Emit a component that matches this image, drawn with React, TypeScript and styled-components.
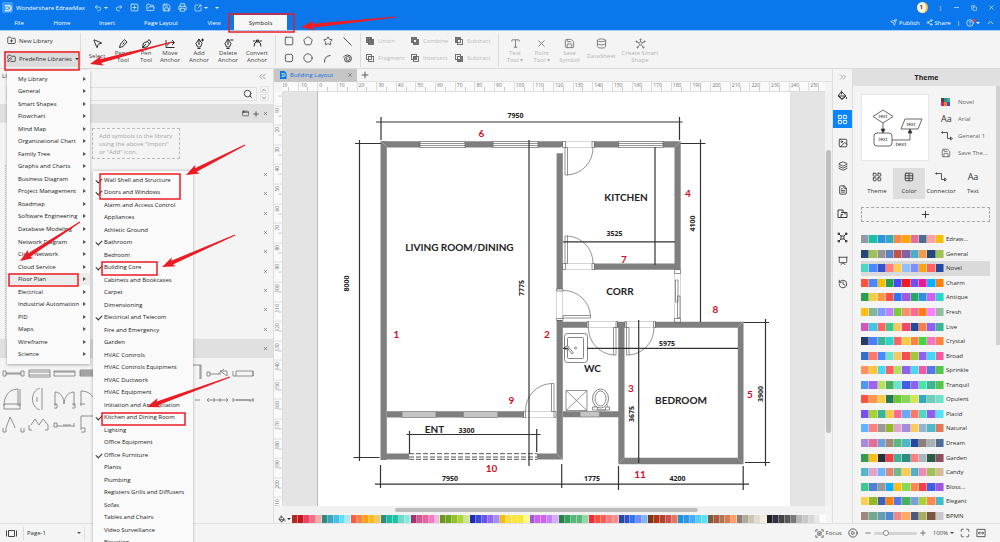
import React from "react";
import styled, { createGlobalStyle, css } from "styled-components";
import {
  AppWindow, ChevronDown, ChevronUp, ChevronsLeft, ChevronsRight, Circle, CirclePlay, CircleQuestionMark, Copy,
  Database, FileText, FolderOpen, FolderPen, FolderPlus, History, Image, Layers, LayoutGrid, Maximize, Minus,
  MousePointer2, Pentagon, Plus, Presentation, Printer, Redo2, Save, Search, Send, Share2, Square,
  SquareArrowOutUpRight, SquarePlus, Star, Table, Type, Undo2, X,
} from "lucide-react";

const BLUE = "#0a78ec";
const INK = "#2c2c2c";

const Global = createGlobalStyle`
  * { box-sizing: border-box; }
  body { margin: 0; background: #f4f4f4; }
  body, button, input, select {
    font: 6px/8px "Open Sans", "Noto Sans", sans-serif;
    color: ${INK};
  }
  button { background: none; border: 0; padding: 0; cursor: pointer; }
  svg { display: block; flex: none; }
`;

const Page = styled.div`
  position: relative;
  display: flex;
  flex-direction: column;
  height: 100vh;
  overflow: hidden;
  background: #f4f4f4;
`;

/* Title bar and menu tabs */
const Header = styled.header`
  background: ${BLUE};
  color: #fff;
  border-bottom: 1px solid #a9cdf3;
  button { color: inherit; }
`;
const TitleRow = styled.div`
  display: flex;
  align-items: center;
  height: 15px;
  padding: 0 5px 0 2px;
`;
const Logo = styled.span`
  display: grid;
  place-items: center;
  width: 11px;
  height: 11px;
  border-radius: 2px;
  background: #3f9bfa;
`;
const AppName = styled.span`
  width: 78px;
  margin-left: 3px;
`;
const QuickTools = styled.div`
  display: flex;
  align-items: center;
  gap: 7px;
  opacity: 0.9;
`;
const IconButton = styled.button`
  display: flex;
  align-items: center;
  justify-content: center;
  gap: 2px;
  color: #444;
`;
const WindowTools = styled.div`
  display: flex;
  align-items: center;
  gap: 11px;
  margin-left: auto;
`;
const Badge = styled.span`
  width: 11px;
  height: 11px;
  border-radius: 50%;
  background: #fdf3d8;
  border-right: 2px solid #f4c04a;
  color: #444;
  font-weight: 700;
  line-height: 11px;
  text-align: center;
`;
const TabRow = styled.nav`
  display: flex;
  align-items: center;
  height: 15px;
  padding-right: 5px;
`;
const MenuTab = styled.button<{ $w: number; $on?: boolean }>`
  width: ${(p) => p.$w}px;
  height: 15px;
  ${(p) => p.$on && css`&& { background: #f7f7f7; color: #222; }`}
`;
const HeaderActions = styled.div`
  display: flex;
  align-items: center;
  gap: 6px;
  margin-left: auto;
`;
const HelpButton = styled(IconButton)`
  position: relative;
  &::after {
    content: "";
    position: absolute;
    top: 0;
    left: 7px;
    width: 3px;
    height: 3px;
    border-radius: 50%;
    background: #f03a2e;
  }
`;

/* Ribbon */
const Ribbon = styled.div`
  display: flex;
  align-items: center;
  height: 38px;
  border-bottom: 1px solid #dadada;
`;
const RibbonGroup = styled.div<{ $w: number }>`
  display: flex;
  width: ${(p) => p.$w}px;
  height: 30px;
  padding: 3px 5px 0;
  justify-content: space-between;
  border-right: 1px solid #dcdcdc;
  &:last-child { border: 0; }
`;
const LibraryGroup = styled.div`
  position: relative;
  z-index: 5;
  display: flex;
  flex-direction: column;
  justify-content: space-between;
  width: 81px;
  height: 34px;
  padding-left: 4px;
  border-right: 1px solid #dcdcdc;
`;
const LibraryButton = styled.button<{ $on?: boolean }>`
  display: flex;
  align-items: center;
  gap: 3px;
  width: 74px;
  height: 16px;
  padding-left: 3px;
  white-space: nowrap;
  background: ${(p) => (p.$on ? "#dcdcdc" : "none")};
`;
const Tool = styled.button<{ $off?: boolean; $single?: boolean; $w: number }>`
  display: flex;
  flex-direction: column;
  align-items: center;
  gap: ${(p) => (p.$single ? 4 : 1)}px;
  width: ${(p) => p.$w}px;
  line-height: 7px;
  color: ${(p) => (p.$off ? "#b5b5b5" : "#444")};
  svg { color: ${(p) => (p.$off ? "#777" : "#222")}; }
`;
const ShapeGrid = styled.div`
  display: grid;
  grid-template-columns: repeat(4, 1fr);
  align-items: center;
  width: 85px;
  height: 34px;
  padding: 0 3px;
  border-right: 1px solid #dcdcdc;
`;
const BoolGrid = styled.div`
  display: grid;
  grid-template-columns: 45px 44px 44px;
  align-items: center;
  width: 138px;
  height: 34px;
  padding-left: 5px;
  border-right: 1px solid #dcdcdc;
`;
const BoolButton = styled.button`
  display: flex;
  align-items: center;
  gap: 4px;
  color: #bbb;
`;

/* Drop-down menus */
const Menu = styled.div`
  position: absolute;
  top: 37px;
  left: 7px;
  width: 83px;
  height: 294px;
  padding: 3px 0;
  display: grid;
  grid-auto-rows: 1fr;
  background: #fafafa;
  box-shadow: 0 1px 3px rgba(0, 0, 0, 0.3);
`;
const MenuItem = styled.button<{ $on?: boolean }>`
  display: flex;
  align-items: center;
  justify-content: space-between;
  padding: 0 4px 0 11px;
  white-space: nowrap;
  color: #222;
  background: ${(p) => (p.$on ? "#ececec" : "none")};
`;
const Caret = styled.span<{ $down?: boolean }>`
  border: 2px solid transparent;
  ${(p) => p.$down
    ? css`border-top-color: currentColor; border-bottom: 0;`
    : css`border-left: 3px solid #555; border-right: 0;`}
`;
const SubMenu = styled.div`
  position: absolute;
  top: 138px;
  left: 93px;
  width: 100px;
  height: 378px;
  padding-top: 3px;
  display: grid;
  grid-auto-rows: 1fr;
  background: #fafafa;
  box-shadow: 0 0 3px rgba(0, 0, 0, 0.3);
`;
const CheckItem = styled.label`
  display: flex;
  align-items: center;
  gap: 3px;
  padding-left: 2px;
  white-space: nowrap;
  color: #222;
`;
const Tick = styled.input`
  appearance: none;
  width: 6px;
  height: 6px;
  margin: 0;
  &:checked::after {
    content: "";
    display: block;
    width: 3px;
    height: 5px;
    margin-left: 2px;
    border: solid #333;
    border-width: 0 1px 1px 0;
    transform: rotate(45deg);
  }
`;

/* Library panel */
const Body = styled.main`
  display: flex;
  flex: 1;
  min-height: 0;
`;
const LibraryPanel = styled.section`
  width: 274px;
  flex: none;
  border-right: 1px solid #ddd;
`;
const PanelTitle = styled.div`
  display: flex;
  align-items: center;
  justify-content: space-between;
  height: 14px;
  padding: 0 5px 0 2px;
`;
const SearchRow = styled.div`
  display: flex;
  align-items: center;
  gap: 3px;
  height: 21px;
  padding: 0 4px 0 6px;
`;
const SearchBox = styled.label`
  display: flex;
  align-items: center;
  flex: 1;
  height: 14px;
  padding-right: 3px;
  border: 1px solid #e0e0e0;
  input { flex: 1; border: 0; background: none; outline: 0; }
`;
const Spin = styled.div`
  display: grid;
  gap: 1px;
  button { width: 9px; height: 7px; border: 1px solid #e2e2e2; border-radius: 1px; }
`;
const GroupBar = styled.div`
  display: flex;
  align-items: center;
  justify-content: flex-end;
  gap: 3px;
  height: 19px;
  padding-right: 5px;
  background: #e0e0e0;
`;
const EmptyNote = styled.p`
  width: 88px;
  height: 31px;
  margin: 5px 0 0 92px;
  padding: 3px 6px;
  border: 1px dashed #bbb;
  color: #a5a5a5;
  white-space: nowrap;
`;
const ClosedGroups = styled.div`
  display: grid;
  grid-auto-rows: 1fr;
  height: 174px;
  margin: 6px 0 0 5px;
  border-left: 1px dotted #ccc;
`;
const ClosedGroup = styled.div`
  display: flex;
  align-items: center;
  justify-content: flex-end;
  padding-right: 5px;
`;
const SymbolGrid = styled.div`
  display: grid;
  grid-template-columns: repeat(10, 1fr);
  grid-template-rows: 32px 18px 32px;
  width: 256px;
  padding-left: 1px;
  align-items: center;
  justify-items: center;
`;

/* Drawing area */
const Stage = styled.section`
  display: flex;
  flex-direction: column;
  flex: 1;
  min-width: 0;
`;
const DocTabs = styled.div`
  display: flex;
  align-items: center;
  gap: 3px;
  height: 13px;
  border-bottom: 1px solid #e0e0e0;
`;
const DocTab = styled.div`
  display: flex;
  align-items: center;
  gap: 3px;
  width: 83px;
  height: 13px;
  padding: 0 4px 0 5px;
  background: #c6c6c6;
  color: #0a6fe0;
  button { margin-left: auto; }
`;
const Rulers = styled.div`
  display: grid;
  grid-template: 10px minmax(0, 1fr) 8px / 9px minmax(0, 1fr) 7px;
  flex: 1;
  min-height: 0;
`;
const TopRuler = styled.div`
  grid-column: 2;
  display: flex;
  overflow: hidden;
  background: #fafafa;
  border-bottom: 1px solid #ddd;
`;
const LeftRuler = styled.div`
  grid-area: 2 / 1;
  overflow: hidden;
  background: #fafafa;
  border-right: 1px solid #ddd;
`;
const TopMarks = styled.div`
  display: grid;
  grid-template-columns: repeat(28, 1fr);
  flex: 0 0 550px;
  margin-left: -5px;
`;
const LeftMarks = styled.div`
  display: grid;
  grid-template-rows: repeat(22, 1fr);
  height: 431px;
  margin-top: -6px;
`;
const Mark = styled.span<{ $side?: boolean }>`
  font-size: 5px;
  line-height: 7px;
  color: #777;
  padding-left: 1px;
  border-left: 1px solid #ddd;
  background: linear-gradient(#ccc, #ccc) 50% 100% / 1px 4px no-repeat;
  ${(p) => p.$side && css`
    display: flex;
    justify-content: flex-end;
    writing-mode: vertical-rl;
    transform: rotate(180deg);
    padding: 0 0 1px;
    border: 0;
    border-bottom: 1px solid #ddd;
    background: linear-gradient(#ccc, #ccc) 0 50% / 4px 1px no-repeat;
  `}
`;
const Canvas = styled.div`
  grid-area: 2 / 2;
  overflow: hidden;
  background: #e4e4e4;
  padding-left: 34px;
`;
const Sheet = styled.div`
  width: 473px;
  height: 100%;
  border-left: 1px solid #bbb;
  background: #fff;
`;
const ScrollY = styled.div`
  grid-area: 2 / 3;
  padding: 58px 1px 73px;
  background: #f1f1f1;
  &::after { content: ""; display: block; height: 100%; border-radius: 3px; background: #c0c0c0; }
`;
const ScrollX = styled.div`
  grid-area: 3 / 2;
  padding: 2px 127px 2px 112px;
  background: #f1f1f1;
  &::after { content: ""; display: block; height: 4px; border-radius: 3px; background: #bdbdbd; }
`;
const ColorBar = styled.div`
  display: flex;
  align-items: center;
  height: 9px;
  padding: 0 6px 0 4px;
  gap: 1px;
`;
const Cells = styled.div`
  display: flex;
  flex: 1;
`;
const Cell = styled.span<{ $c: string }>`
  flex: 1;
  height: 8px;
  background: ${(p) => p.$c};
  border-right: 1px solid rgba(255, 255, 255, 0.4);
`;

/* Right side */
const Rail = styled.nav`
  display: grid;
  grid-template-rows: 15px repeat(9, 1fr);
  align-items: center;
  align-self: flex-start;
  flex: 0 0 19px;
  height: 227px;
`;
const RailButton = styled.button<{ $on?: boolean }>`
  display: grid;
  place-items: center;
  height: 18px;
  color: ${(p) => (p.$on ? "#fff" : "#333")};
  background: ${(p) => (p.$on ? "#0a84ff" : "none")};
`;
const RailColumn = styled.div`
  display: flex;
  border: solid #dedede;
  border-width: 0 1px;
`;
const ThemePanel = styled.aside`
  display: flex;
  flex-direction: column;
  flex: 0 0 147px;
`;
const ThemeTitle = styled.h2`
  margin: 0;
  font-size: 7px;
  line-height: 17px;
  text-align: center;
  color: #222;
  background: #e0e0e0;
`;
const ThemeBody = styled.div`
  display: flex;
  flex-direction: column;
  flex: 1;
  min-height: 0;
  padding: 8px 7px 0 8px;
  background: linear-gradient(#d2d2d2, #d2d2d2) 100% 0 / 4px 259px no-repeat;
`;
const ThemeTop = styled.div`
  display: flex;
  gap: 12px;
`;
const Preview = styled.div`
  width: 68px;
  height: 67px;
  background: #fff;
  border: 1px solid #e6e6e6;
`;
const ThemeFacts = styled.div`
  display: grid;
  grid-auto-rows: 1fr;
`;
const Fact = styled.button`
  display: grid;
  grid-template-columns: 12px auto;
  gap: 5px;
  align-items: center;
  text-align: left;
  color: #666;
`;
const Aa = styled.span`
  font-size: 9px;
  line-height: 10px;
  color: #333;
`;
const NovelDots = styled.span`
  display: grid;
  grid-template-columns: repeat(3, 3px);
  grid-auto-rows: 4px;
`;
const Dot = styled.i<{ $c: string }>`
  background: ${(p) => p.$c};
`;
const ThemeTabs = styled.div`
  display: grid;
  grid-template-columns: repeat(4, 32px);
  margin: 7px 0 8px;
`;
const ThemeTab = styled.button<{ $on?: boolean }>`
  display: flex;
  flex-direction: column;
  align-items: center;
  justify-content: center;
  gap: 5px;
  height: 31px;
  color: #333;
  background: ${(p) => (p.$on ? "#dedede" : "none")};
`;
const AddScheme = styled.button`
  display: grid;
  place-items: center;
  height: 15px;
  margin: 0 3px 10px 0;
  border: 1px dashed #aaa;
`;
const Schemes = styled.div`
  display: grid;
  grid-auto-rows: 1fr;
  flex: 1;
  min-height: 0;
  margin-right: 3px;
`;
const Scheme = styled.button<{ $on?: boolean }>`
  display: flex;
  align-items: center;
  gap: 2px;
  background: ${(p) => (p.$on ? "#dadada" : "none")};
`;
const Swatches = styled.span`
  display: flex;
  width: 83px;
`;

/* Status bar */
const Status = styled.footer`
  display: flex;
  align-items: center;
  height: 19px;
  padding: 0 14px 0 6px;
  border-top: 1px solid #e0e0e0;
`;
const PageBox = styled.label`
  display: flex;
  align-items: center;
  width: 62px;
  height: 13px;
  margin-left: 6px;
  padding: 0 3px;
  border: solid #ddd;
  border-width: 0 1px;
  color: #555;
`;
const PageSelect = styled.select`
  appearance: none;
  flex: 1;
  border: 0;
  background: none;
`;
const StatusTools = styled.div`
  display: flex;
  align-items: center;
  gap: 6px;
  margin-left: auto;
`;
const ZoomGroup = styled.div`
  display: flex;
  align-items: center;
  gap: 2px;
`;
const Zoom = styled.input`
  appearance: none;
  width: 43px;
  height: 3px;
  margin: 0;
  border-radius: 2px;
  background: #d4d4d4;
  &::-webkit-slider-thumb {
    appearance: none;
    width: 6px;
    height: 6px;
    border-radius: 50%;
    border: 1px solid #888;
    background: #fff;
  }
`;
const Marks = styled.svg`
  position: absolute;
  top: 0;
  left: 0;
  z-index: 9;
  pointer-events: none;
`;

const MENU = ["My Library", "General", "Smart Shapes", "Flowchart", "Mind Map", "Organizational Chart", "Family Tree",
  "Graphs and Charts", "Business Diagram", "Project Management", "Roadmap", "Software Engineering",
  "Database Modeling", "Network Diagram", "Cisco Network", "Cloud Service", "Floor Plan", "Electrical",
  "Industrial Automation", "PID", "Maps", "Wireframe", "Science"];

/* A leading star marks a library that is switched on. */
const SUB = ["*Wall Shell and Structure", "*Doors and Windows", "Alarm and Access Control", "Appliances",
  "Athletic Ground", "*Bathroom", "Bedroom", "*Building Core", "Cabinets and Bookcases", "Carpet", "Dimensioning",
  "*Electrical and Telecom", "Fire and Emergency", "Garden", "HVAC Controls", "HVAC Controls Equipment",
  "HVAC Ductwork", "HVAC Equipment", "Initiation and Annunciation", "*Kitchen and Dining Room", "Lighting",
  "Office Equipment", "*Office Furniture", "Plants", "Plumbing", "Registers Grills and Diffusers", "Sofas",
  "Tables and Chairs", "Video Surveillance", "Elevation"];

const PALETTE = `b02a1e c8141e f04060 f56a8a f9a8a8 2b8c84 36a9bd 45bfe6 5be0f5 a8e6fa ff5a3c ff8040 ffa011 ffb91a f8c760
2b8c84 17bfa0 1cc3a6 6edcc8 88ece6 a0356a d05a94 f06098 f57acb f0bada 6a981e 6fa51f 94c024 aad43c d0e68a
1f2bb5 3b49d8 7050f0 9068f2 a88cf5 f5be0a f9e039 f8e638 f8e638 ffff80 9f57e0 cc62f0 cc62f0 c083ff d9a8fb
27804a 34a05a 55b87a 5bb87e 92d8a6 ef2b36 ff5038 ff5a5a ff7a7a ff8c8c 2349a0 3450d0 2e76f5 6f8bff 7cb6f5
78380c b0341a b0452c d05050 e07a5c 1e93dc 2d98e8 44aaff 4fd4ee 58e2f5 7c583c b0583c a87850 e07a50 ffa068
8a8078 b3a998 cdc6b6 e2dccf f6ecdc 1f1f27 2e3140 434343 5a5a5a 7a7a7a b8b8b8 c8c8c8 d8d8d8 e8e8e8 fcfcfc`.split(/\s+/);

const SCHEMES: [string, string][] = [
  ["Edraw...", "8e9aa8 1cbfa2 2d94dc 36a9bd f98840 ffa411 e07098 4f6c94 f8a2a2 f5be0a"],
  ["General", "234878 a0c058 949494 5a82bf c8504c 8062a2 4aaec6 f89848 234878 a0c058"],
  ["Novel", "4fd6c2 4a88ff 3a50c8 ff8080 ffcc58 90c0ff 7f90ff ffa411 ff6464 2349a0"],
  ["Charm", "ff5438 4a88ff f5be0a 27a052 4b48ff ef1b24 7050f0 ec1898 10acff ff8010"],
  ["Antique", "27a052 f4cc48 f89848 f05050 2e76f5 9f57e0 27a862 2d94dc cc62f0 2cd6cc"],
  ["Fresh", "ffbe18 80b89a 8098ff c083ff 78cc38 ff9068 ff6890 ff8010 ff80ff 90bca0"],
  ["Live", "d058b8 44c4e0 ff6464 40c888 f8c860 f04868 2349a0 ff8040 9060f0 3eb496"],
  ["Crystal", "283868 4a80ff 3eb496 2cd6cc ff6464 f4cc48 ff8440 40d840 f474c8 ff8440"],
  ["Broad", "3070c8 ff7868 4a88ff 6ee2cc f8c860 f05050 a0c838 9060f0 44d8f0 f05ca0"],
  ["Sprinkle", "ff9060 ffc440 4ad8f0 ff6060 b4e060 9060e8 4ad8f0 f05ca0 5478e8 58c450"],
  ["Tranquil", "4f98f0 9f62e8 b8e060 48b060 6ee2cc 4060e0 9060f0 48e4a8 3eb496 58c450"],
  ["Opulent", "ff5040 f89848 f4cc48 27784a 68c838 88d858 d4e658 36a9bd 70ccb8 6ee2cc"],
  ["Placid", "7850f0 a8d038 3eb496 f4cc48 ff6890 68a8f8 ff7868 50d8c0 9060f0 58e2f5"],
  ["Natural", "60b4ff ff8080 989898 94b828 e0a4cc a48cd8 ffcc58 98b4cc 50b8c8 e07a5c"],
  ["Dream", "a48cd8 e07098 70a0d8 a48878 58b880 50b8c8 2349a0 8a8078 a8b4b8 4f6c94"],
  ["Garden", "389a50 ffbe18 2a303c f04048 3eb496 2b8c84 ff8080 a8b4b8 305a48 8c5060"],
  ["Candy", "50b8c8 e0a4cc 70b4ff e08878 78b888 ffcc58 50b0c8 f088b4 a0c058 d4bc98"],
  ["Bloss...", "40c888 5080d0 989898 10acff ffbe18 88d858 ff8850 f04048 4060e0 9f57e0"],
  ["Elegant", "ffcc58 94b828 4060b0 ff8010 5478e8 48b060 78a0d8 a8d038 ff8850 44bcc8"],
  ["BPMN", "9c8880 70a890 689cb4 5088d0 f08888 ffa860 50587c a8b060 785840 c8c8c8"],
];

const SYMBOLS = [
  "M1 8v5h3v-5zM19 8v5h3v-5zM4 10h15M4 11h15", "M1 7h21v7h-21zM1 9h21M1 12h21", "M1 8h21v5h-21zM1 9h21",
  "M1 7h21v6h-21zM1 8h21M1 9h21M1 10h21M1 11h21M1 12h21", "", "", "", "M8 2h12v14M19 2v14",
  "M1 9v4h3v-4zM4 11h8l6-5M12 11h3M14 8l7 5v-5z", "M1 8v5h3v-5M4 8h17v5h-17M21 8v5",
  "M18 18V1M16 18V1C7 1 2 8 2 18M2 16h16v5h-16z", "M14 0v22M12 0C2 3 2 19 12 22M9 9v5",
  "M2 18V4C8 4 11 10 11 16C11 10 15 4 21 4v14M1 16h3v4h-3M19 16h3v4h-3", "M2 18V3C10 3 16 8 16 16M1 16h5M17 16h5",
  "", "", "", "M1 12h9M2 10v4M14 12h5", "M1 12h21M3 10l-2 2 2 2M8 10v4M14 10v4M20 10l2 2-2 2",
  "M1 12h21M1 10v4M4 12h14v2M21 10v4",
  "M1 15v4h3v-4M4 15L8 4L12 12L13 15M19 15v4h3v-4", "M1 12v5h3M3 12L7 6L11 12L15 6L20 12M20 12v5h-3",
  "M1 10v4h3v-4zM4 13h17M10 12h8M21 10v4", "M2 17V3h18M2 15h4v4h-4M16 15h5v4", "", "", "", "", "", "",
];

/* Tapered pointer from (x1, y1) to its head at (x2, y2). */
function arrow(x1: number, y1: number, x2: number, y2: number) {
  const len = Math.hypot(x2 - x1, y2 - y1);
  const ux = (x2 - x1) / len, uy = (y2 - y1) / len;
  const at = (back: number, side: number) => `${x2 - ux * back - uy * side},${y2 - uy * back + ux * side}`;
  return [at(0, 0), at(13, 5), at(11, 2), at(len, 0.5), at(len, -0.5), at(11, -2), at(13, -5)].join(" ");
}

const ARROWS = [[396, 17, 301, 27], [172, 42, 90, 64], [245, 145, 186, 175], [80, 222, 20, 261], [235, 235, 162, 267], [230, 377, 147, 407]];
const BOXES = [[229, 14, 65, 18], [5, 52, 74, 18], [100, 174, 80, 25], [102, 262, 55, 13], [102, 413, 83, 12], [9, 274, 69, 12]];

function Annotations() {
  return (
    <Marks width="400" height="440" fill="none" stroke="#ec1c24" aria-hidden="true">
      {BOXES.map(([x, y, w, h]) => <rect key={y} x={x} y={y} width={w} height={h} strokeWidth="1.5" />)}
      {ARROWS.map((a) => <polygon key={a.join()} points={arrow(a[0], a[1], a[2], a[3])} fill="#ec1c24" stroke="none" />)}
    </Marks>
  );
}

const WALLS = `M380.5 141.3H420v6.3H380.5zM465 141.3h28v6.3h-28zM538 141.3h25v5l-3 1.3H538zM594 141.3h24.5v6.3H594zM663 141.3h17.7v128h-6.2V147.6H663z
M380.5 141h6.3v319h-6.3zM556.6 153.3h6.2V289h-6.2zM556.6 320h6.2v139.5h-6.2zM594 263.5h86.5v6.3H594z
M557 321.7h30v6H557zM617 321.7h8v6h-8zM655 321.7h88.5V464.2H618.3V324h6.2v133.7h113.3V327.7H655z
M387 411.3h15v6.3h-15zM436 411.3h27.5v6.3H436zM498 411.3h26v6.3h-26zM563 411.3h17v5.9h-17zM599.5 411.3h19v5.9h-19z
M381 453.5h28v6h-28zM537 453.5h21v6h-21z`;
const DIMS = `M376 122H682.5M381 117v23M679.5 117v23M359.5 140v321M355 143.5h26M353.5 457.500h26M529 140v326M655 147v118
M563 241.8h112M700.5 139.5V322M680.5 143.5h25M765.5 319v147M743.5 322.5h25.5M745 462.5h25M563 348.3h5M587 348.3h151
M638.7 320v143M406.5 434.5h134M409.5 431v23M536.7 429v23M375 484.2h374M380.5 465v23M561.7 464v24M618.5 466v24M743.2 466v24`;
const THIN = `M420 141.5h45M420 143.5h45M420 145.5h45M420 147.5h45M493 141.5h45M493 143.5h45M493 145.5h45M493 147.5h45M618.5 141.5H663M618.5 143.5H663M618.5 145.5H663M618.5 147.5H663
M420 141v7M465 141v7M493 141v7M538 141v7M618.5 141v7M663 141v7
M562.5 141.5h3v6h-3zM592 141.5h2.5v6h-2.5zM565 147.5h2.5V175h-2.5zM567 175A27 27 0 0 0 593 148
M562.5 263.5h3v6h-3zM592 263.5h2.5v6h-2.5zM565 236h2.5v27.5h-2.5zM567 236A27 27 0 0 1 593 263.5
M556.5 289h6.5v2h-6.5zM556.5 318.5h6.5v2h-6.5zM563 315.5h27.5v2.5H563zM563 290.5A27 27 0 0 1 590.5 316
M674.5 269.5h6v4h-6zM674.5 318.5h6v4h-6zM675.5 280h2.5v22h-2.5zM677.5 296h2.5v22h-2.5z
M587 321.5h1.5v6h-1.5zM616 321.5h1.5v6h-1.5zM613.5 327.5h2.5V355h-2.5zM588.5 328A27 27 0 0 0 613.5 355
M625 321.5h1.5v6h-1.5zM653.5 321.5h2v6h-2zM626.5 327.5h2.5V355h-2.5zM654 328A27 27 0 0 1 629 355
M523.5 411.5h2v6h-2zM554 411.5h2v6h-2zM551.5 383.5h2.5v28h-2.5zM551.5 383.5A27 27 0 0 0 525.5 411
M566 390.5h21v20h-21zM566 390.5l21 20M587 390.5l-21 20M592.5 410v-3h5v3h8v-3h4v3zM594.5 407l2-4M608 407l-2-4`;
const PALE = `M565.5 141.5H592M565.5 147.5H592M565.5 263.5H592M565.5 269.5H592M556.5 291v27.5M562.5 291v27.5M674.5 273v46M680.5 273v46
M588 321.5h28M588 327.5h28M626 321.5h28M626 327.5h28M525 411.5h29M525 417.5h29M381 141l6 6M680.5 141l-6 6M557 454l6 6M618 464l6-6M743.5 464l-6-6M743.5 321.5l-6 6`;

const NUMBERS: [string, number, number][] = [["1", 396.5, 338], ["2", 547, 338], ["3", 631, 392], ["4", 688, 197],
  ["5", 750, 398], ["6", 481.5, 137], ["7", 624, 263], ["8", 715.5, 313], ["9", 511.5, 404], ["10", 491.5, 472], ["11", 640, 478]];
const ROOMS: [string, number, number][] = [["LIVING ROOM/DINING", 459.5, 251], ["KITCHEN", 626, 201], ["CORR", 620, 295],
  ["WC", 592.5, 372], ["BEDROOM", 681, 404], ["ENT", 434.5, 433]];
const LENGTHS: [string, number, number, boolean?][] = [["7950", 515.5, 118], ["3525", 614.5, 236], ["5975", 667, 345.5],
  ["3300", 466.5, 433], ["7950", 450, 480.5], ["1775", 592, 481], ["4200", 677.5, 481],
  ["8000", 349, 283.5, true], ["7775", 523.5, 288, true], ["4100", 694.5, 223.5, true], ["3675", 633.5, 414, true], ["3900", 762.5, 394, true]];

const Plan = styled.svg`
  text { text-anchor: middle; fill: #222; }
  .room { font: 700 10px Lato, sans-serif; }
  .mark { font: 700 10px Lato, sans-serif; fill: #d40c1c; }
  .size { font: 700 7px "Open Sans", sans-serif; }
`;

function FloorPlan() {
  return (
    <Plan viewBox="318 92 472 415" width="472" height="415" fill="none" role="img" aria-label="Floor plan">
      <path d={WALLS} fill="#7f7f7f" />
      <path d={PALE} stroke="#bbb" strokeWidth="0.6" />
      <path d="M402 411.5h34v6h-34zM463.5 411.5h34v6h-34zM580 411.5h19.5v5.5h-19.5z" fill="#c4c4c4" stroke="#777" strokeWidth="0.7" />
      <path d="M409 453.7h128M409 457h128M409 459.3h128" stroke="#555" strokeDasharray="5 2" />
      <path d={THIN} stroke="#666" strokeWidth="0.7" />
      <g stroke="#666" strokeWidth="0.8">
        <rect x="564.5" y="333.5" width="23" height="29" rx="3" />
        <rect x="567.5" y="337.5" width="16" height="21" rx="1" />
        <circle cx="575.5" cy="348" r="1" />
        <circle cx="567" cy="348" r="2" fill="#fff" />
        <path d="M568 349l4 5 1.5-1-4-5" />
        <ellipse cx="600.5" cy="398.5" rx="8" ry="9.5" fill="#fff" />
        <ellipse cx="600.5" cy="398.5" rx="5.5" ry="7.5" />
      </g>
      <path d={DIMS} stroke="#333" strokeWidth="1.2" />
      {ROOMS.map(([t, x, y]) => <text key={t} className="room" x={x} y={y}>{t}</text>)}
      {NUMBERS.map(([t, x, y]) => <text key={t} className="mark" x={x} y={y}>{t}</text>)}
      {LENGTHS.map(([t, x, y, up]) => (
        <text key={t + x} className="size" x={x} y={y} transform={up ? `rotate(-90 ${x} ${y})` : undefined}>{t}</text>
      ))}
    </Plan>
  );
}

function ThemePreview() {
  return (
    <svg viewBox="0 0 66 65" width="66" height="65" fill="none" stroke="#444" strokeWidth="0.8">
      <path d="M21 15L31 21.5L21 28L11 21.5zM43 24h17l-4 10H39zM15 38h12q3 0 3 3v7q0 3-3 3H15q-3 0-3-3v-7q0-3 3-3zM21 28v8M30 45h18V36" />
      <path d="M19 34h4l-2 4zM46 38h4l-2-4z" fill="#222" />
      <g fill="#222" stroke="none" fontSize="5" textAnchor="middle">
        <text x="21" y="23">text</text><text x="49" y="31">text</text><text x="21" y="46">text</text>
        <text x="39" y="51" fontSize="6">text</text>
      </g>
    </svg>
  );
}

const Glyph = ({ d, size = 11 }: { d: string; size?: number }) => (
  <svg width={size} height={size} viewBox="0 0 22 22" fill="none" stroke="currentColor" strokeWidth="1.9"><path d={d} /></svg>
);
const NIB = "M10 2L4 11l3 7h6l3-7zM10 2v9M7 21h6M8 12h4";
const ATOM = "M11 8a3 3 0 1 0 .1 0zM11 8V4M8 10L4 8M14 10l4-2M9 14l-3 4M13 14l3 4M10 2h2v2h-2zM2 6h2v2H2zM18 6h2v2h-2zM4 18h2v2H4zM16 18h2v2h-2z";
const BUCKET = "M9 3l9 9-8 7-8-7zM4 12h13l-7 6zM19 14v4M9 1v8";
const FLOOR = "M2 4h10v5H8M12 9h8v10H2V4M8 19v-6h4M16 9v4";
const HUB = "M8 8h6v6H8zM8 8L4 4M14 8l4-4M8 14l-4 4M14 14l4 4M2 2h3v3H2zM17 2h3v3h-3zM2 17h3v3H2zM17 17h3v3h-3z";
const FOCUS = "M2 7V2h5M15 2h5v5M20 15v5h-5M7 20H2v-5M7 7h8v8H7zM9 11h4";

const Connector = () => (
  <svg width="12" height="10" viewBox="0 0 24 20" fill="none" stroke="#444" strokeWidth="1.8">
    <path d="M1 3h3M5 3h8v12h6" /><circle cx="3" cy="3" r="1.5" /><path d="M19 12l4 3-4 3z" />
  </svg>
);
const Bool = ({ a, b, c }: { a: string; b: string; c: string }) => (
  <svg width="8" height="8" viewBox="0 0 16 16" stroke="#666" strokeWidth="1.8">
    <rect x="1" y="1" width="10" height="10" fill={a} /><rect x="5" y="5" width="10" height="10" fill={b} />
    <rect x="5" y="5" width="6" height="6" fill={c} />
  </svg>
);

const light = "#f4f4f4", gray = "#777";

export default function App() {
  return (
    <Page>
      <Global />
      <Header>
        <TitleRow>
          <Logo>
            <svg width="8" height="8" viewBox="0 0 16 16" fill="none" stroke="#fff" strokeWidth="2.5">
              <path d="M2 3h7q5 0 5 5t-5 5H2M3 8h6" />
            </svg>
          </Logo>
          <AppName>Wondershare EdrawMax</AppName>
          <QuickTools>
            <IconButton aria-label="Undo"><Undo2 size={8} /><Caret $down /></IconButton>
            <IconButton aria-label="Redo"><Redo2 size={8} /></IconButton>
            <IconButton aria-label="New"><SquarePlus size={9} /></IconButton>
            <IconButton aria-label="Open"><FolderOpen size={9} /></IconButton>
            <IconButton aria-label="Save"><Save size={9} /></IconButton>
            <IconButton aria-label="Print"><Printer size={9} /></IconButton>
            <IconButton aria-label="Export"><SquareArrowOutUpRight size={8} /><Caret $down /></IconButton>
            <IconButton aria-label="More"><Caret $down /></IconButton>
          </QuickTools>
          <WindowTools>
            <Badge>1</Badge><span>|</span>
            <IconButton aria-label="Minimize"><Minus size={7} /></IconButton>
            <IconButton aria-label="Restore"><Copy size={6} /></IconButton>
            <IconButton aria-label="Close"><X size={7} /></IconButton>
          </WindowTools>
        </TitleRow>
        <TabRow>
          <MenuTab $w={38}>File</MenuTab>
          <MenuTab $w={48}>Home</MenuTab>
          <MenuTab $w={42}>Insert</MenuTab>
          <MenuTab $w={66}>Page Layout</MenuTab>
          <MenuTab $w={40}>View</MenuTab>
          <MenuTab $w={53} $on>Symbols</MenuTab>
          <HeaderActions>
            <IconButton><Send size={7} />Publish</IconButton>
            <IconButton><Share2 size={7} />Share</IconButton>
            <span>|</span>
            <HelpButton aria-label="Help"><CircleQuestionMark size={8} /><Caret $down /></HelpButton>
            <IconButton aria-label="Collapse ribbon"><ChevronUp size={9} /></IconButton>
          </HeaderActions>
        </TabRow>
      </Header>

      <Ribbon>
        <LibraryGroup>
          <LibraryButton><FolderPlus size={9} />New Library</LibraryButton>
          <LibraryButton $on><FolderPen size={9} />Predefine Libraries<Caret $down /></LibraryButton>
          <Menu role="menu">
            {MENU.map((m) => <MenuItem key={m} role="menuitem" $on={m === "Floor Plan"}>{m}<Caret /></MenuItem>)}
          </Menu>
          <SubMenu>
            {SUB.map((s) => (
              <CheckItem key={s}><Tick type="checkbox" defaultChecked={s[0] === "*"} />{s.replace("*", "")}</CheckItem>
            ))}
          </SubMenu>
        </LibraryGroup>
        <RibbonGroup $w={195}>
          <Tool $w={22} $single><MousePointer2 size={11} />Select</Tool>
          <Tool $w={24}><Glyph d="M3 19l2-7L13 3l5 5-8 9zM9 13l4-4" />Pencil<br />Tool</Tool>
          <Tool $w={16}><Glyph d="M3 19l2-9 8-3 4 5-5 6zM3 19l7-7M13 7l3-4 4 5-3 4" />Pen<br />Tool</Tool>
          <Tool $w={26}><Glyph d="M2 4v15h17M5 15q1-6 6-6h7M14 4l5 5-5 5" />Move<br />Anchor</Tool>
          <Tool $w={26}><Glyph d={NIB + "M17 1v6M14 4h6"} />Add<br />Anchor</Tool>
          <Tool $w={26}><Glyph d={NIB + "M14 4h7"} />Delete<br />Anchor</Tool>
          <Tool $w={26}><Glyph d="M2 6h5M15 6h5M4 17q0-9 7-11 7 2 7 11M9 4h4v4h-4z" />Convert<br />Anchor</Tool>
        </RibbonGroup>
        <ShapeGrid>
          <IconButton aria-label="Rectangle"><Square size={10} /></IconButton>
          <IconButton aria-label="Pentagon"><Pentagon size={10} /></IconButton>
          <IconButton aria-label="Star"><Star size={10} /></IconButton>
          <IconButton aria-label="Line"><Glyph d="M3 3l16 16" /></IconButton>
          <IconButton aria-label="Rounded rectangle"><Glyph size={10} d="M7 3h8q4 0 4 4v8q0 4-4 4H7q-4 0-4-4V7q0-4 4-4z" /></IconButton>
          <IconButton aria-label="Circle"><Circle size={10} /></IconButton>
          <IconButton aria-label="Arc"><Glyph d="M5 19Q4 6 17 5" /></IconButton>
          <IconButton aria-label="Spiral"><Glyph d="M2 9Q5 4 11 4q8 0 8 7t-8 7q-6 0-6-5t6-6q5 0 5 4t-5 4q-3 0-3-3 1-2 3-1" /></IconButton>
        </ShapeGrid>
        <BoolGrid>
          <BoolButton><Bool a={gray} b={gray} c={gray} />Union</BoolButton>
          <BoolButton><Bool a={gray} b={gray} c={light} />Combine</BoolButton>
          <BoolButton><Bool a={gray} b={light} c={light} />Subtract</BoolButton>
          <BoolButton><Bool a={light} b={light} c={light} />Fragment</BoolButton>
          <BoolButton><Bool a={light} b={light} c={gray} />Intersect</BoolButton>
          <BoolButton><Bool a={light} b={gray} c={light} />Subtract</BoolButton>
        </BoolGrid>
        <RibbonGroup $w={165}>
          <Tool $off $w={22}><Type size={11} />Text<br />Tool ▾</Tool>
          <Tool $off $w={22}><X size={11} />Point<br />Tool ▾</Tool>
          <Tool $off $w={24}><Save size={11} />Save<br />Symbol</Tool>
          <Tool $off $single $w={30}><Database size={11} />DataSheet</Tool>
          <Tool $off $w={38}><Glyph d={ATOM} />Create Smart<br />Shape</Tool>
        </RibbonGroup>
      </Ribbon>

      <Body>
        <LibraryPanel>
          <PanelTitle>Libraries<ChevronsLeft size={11} strokeWidth={1} /></PanelTitle>
          <SearchRow>
            <SearchBox><input aria-label="Search symbols" /><Search size={10} /></SearchBox>
            <Spin>
              <button aria-label="Previous"><ChevronUp size={6} /></button>
              <button aria-label="Next"><ChevronDown size={6} /></button>
            </Spin>
          </SearchRow>
          <GroupBar><AppWindow size={7} /><Plus size={8} /><X size={5} /></GroupBar>
          <EmptyNote>Add symbols to the library<br />using the above "Import"<br />or "Add" icon.</EmptyNote>
          <ClosedGroups>
            {Array.from({ length: 9 }, (_, n) => <ClosedGroup key={n}><X size={5} /></ClosedGroup>)}
          </ClosedGroups>
          <GroupBar><X size={5} /></GroupBar>
          <SymbolGrid>
            {SYMBOLS.map((d, n) => (
              <svg key={n} width="23" height="22" viewBox="0 0 23 22" fill="none" stroke="#777" strokeWidth="0.8"><path d={d} /></svg>
            ))}
          </SymbolGrid>
        </LibraryPanel>

        <Stage>
          <DocTabs>
            <DocTab>
              <svg width="8" height="8" viewBox="0 0 16 16">
                <path d="M2 0h9l4 4v12H2z" fill={BLUE} />
                <path d="M5 5h4q3 0 3 3t-3 3H5M6 8h3" stroke="#fff" strokeWidth="1.5" fill="none" />
              </svg>
              Building Layout
              <IconButton aria-label="Close tab"><X size={6} /></IconButton>
            </DocTab>
            <IconButton aria-label="New tab"><Plus size={10} /></IconButton>
          </DocTabs>
          <Rulers>
            <TopRuler><TopMarks>{Array.from({ length: 28 }, (_, n) => <Mark key={n}>{n * 10 - 20}</Mark>)}</TopMarks></TopRuler>
            <LeftRuler><LeftMarks>{Array.from({ length: 22 }, (_, n) => <Mark key={n} $side>{n * 10}</Mark>)}</LeftMarks></LeftRuler>
            <Canvas><Sheet><FloorPlan /></Sheet></Canvas>
            <ScrollY />
            <ScrollX />
          </Rulers>
          <ColorBar>
            <Glyph d={BUCKET} size={8} /><Caret $down />
            <Cells>{PALETTE.map((c, n) => <Cell key={n} $c={"#" + c} />)}</Cells>
          </ColorBar>
        </Stage>

        <RailColumn>
          <Rail>
            <RailButton aria-label="Collapse"><ChevronsRight size={10} strokeWidth={1} /></RailButton>
            <RailButton aria-label="Fill"><Glyph d={BUCKET} /></RailButton>
            <RailButton aria-label="Theme" $on><LayoutGrid size={11} /></RailButton>
            <RailButton aria-label="Picture"><Image size={10} /></RailButton>
            <RailButton aria-label="Layers"><Layers size={10} /></RailButton>
            <RailButton aria-label="Page"><FileText size={10} /></RailButton>
            <RailButton aria-label="Floor plan"><Glyph d={FLOOR} /></RailButton>
            <RailButton aria-label="Relations"><Glyph d={HUB} /></RailButton>
            <RailButton aria-label="Slides"><Presentation size={10} /></RailButton>
            <RailButton aria-label="History"><History size={10} /></RailButton>
          </Rail>
        </RailColumn>

        <ThemePanel>
          <ThemeTitle>Theme</ThemeTitle>
          <ThemeBody>
            <ThemeTop>
              <Preview><ThemePreview /></Preview>
              <ThemeFacts>
                <Fact>
                  <NovelDots>
                    {["#444", "#2d8c9c", "#3ab47c", "#d0206c", "#ff7a20", "#3a50c8"].map((c) => <Dot key={c} $c={c} />)}
                  </NovelDots>Novel
                </Fact>
                <Fact><Aa>Aa</Aa>Arial</Fact>
                <Fact><Connector />General 1</Fact>
                <Fact><Save size={10} />Save The...</Fact>
              </ThemeFacts>
            </ThemeTop>
            <ThemeTabs>
              <ThemeTab><LayoutGrid size={10} />Theme</ThemeTab>
              <ThemeTab $on><Table size={10} />Color</ThemeTab>
              <ThemeTab><Connector />Connector</ThemeTab>
              <ThemeTab><Aa>Aa</Aa>Text</ThemeTab>
            </ThemeTabs>
            <AddScheme aria-label="Add colour scheme"><Plus size={11} /></AddScheme>
            <Schemes>
              {SCHEMES.map(([name, colors]) => (
                <Scheme key={name} $on={name === "Novel"}>
                  <Swatches>{colors.split(" ").map((c, n) => <Cell key={n} $c={"#" + c} />)}</Swatches>{name}
                </Scheme>
              ))}
            </Schemes>
          </ThemeBody>
        </ThemePanel>
      </Body>

      <Status>
        <svg width="11" height="9" viewBox="0 0 22 18" fill="none" stroke="#444" strokeWidth="2"><path d="M5 3h12v12H5zM1 3v12M21 3v12" /></svg>
        <PageBox>
          <PageSelect aria-label="Page"><option>Page-1</option></PageSelect><Caret $down />
        </PageBox>
        <StatusTools>
          <IconButton><Glyph d={FOCUS} size={9} />Focus</IconButton>
          <IconButton aria-label="Play"><CirclePlay size={10} /></IconButton>
          <ZoomGroup>
            <IconButton aria-label="Zoom out"><Minus size={8} /></IconButton>
            <Zoom type="range" aria-label="Zoom" defaultValue={24} />
            <IconButton aria-label="Zoom in"><Plus size={8} /></IconButton>
          </ZoomGroup>
          <IconButton>100%<Caret $down /></IconButton>
          <IconButton aria-label="Full screen"><Maximize size={10} /></IconButton>
          <IconButton aria-label="Fit page"><Glyph size={10} d="M2 3h18v16H2zM6 11h10M8 8l-3 3 3 3M14 8l3 3-3 3" /></IconButton>
        </StatusTools>
      </Status>
      <Annotations />
    </Page>
  );
}
